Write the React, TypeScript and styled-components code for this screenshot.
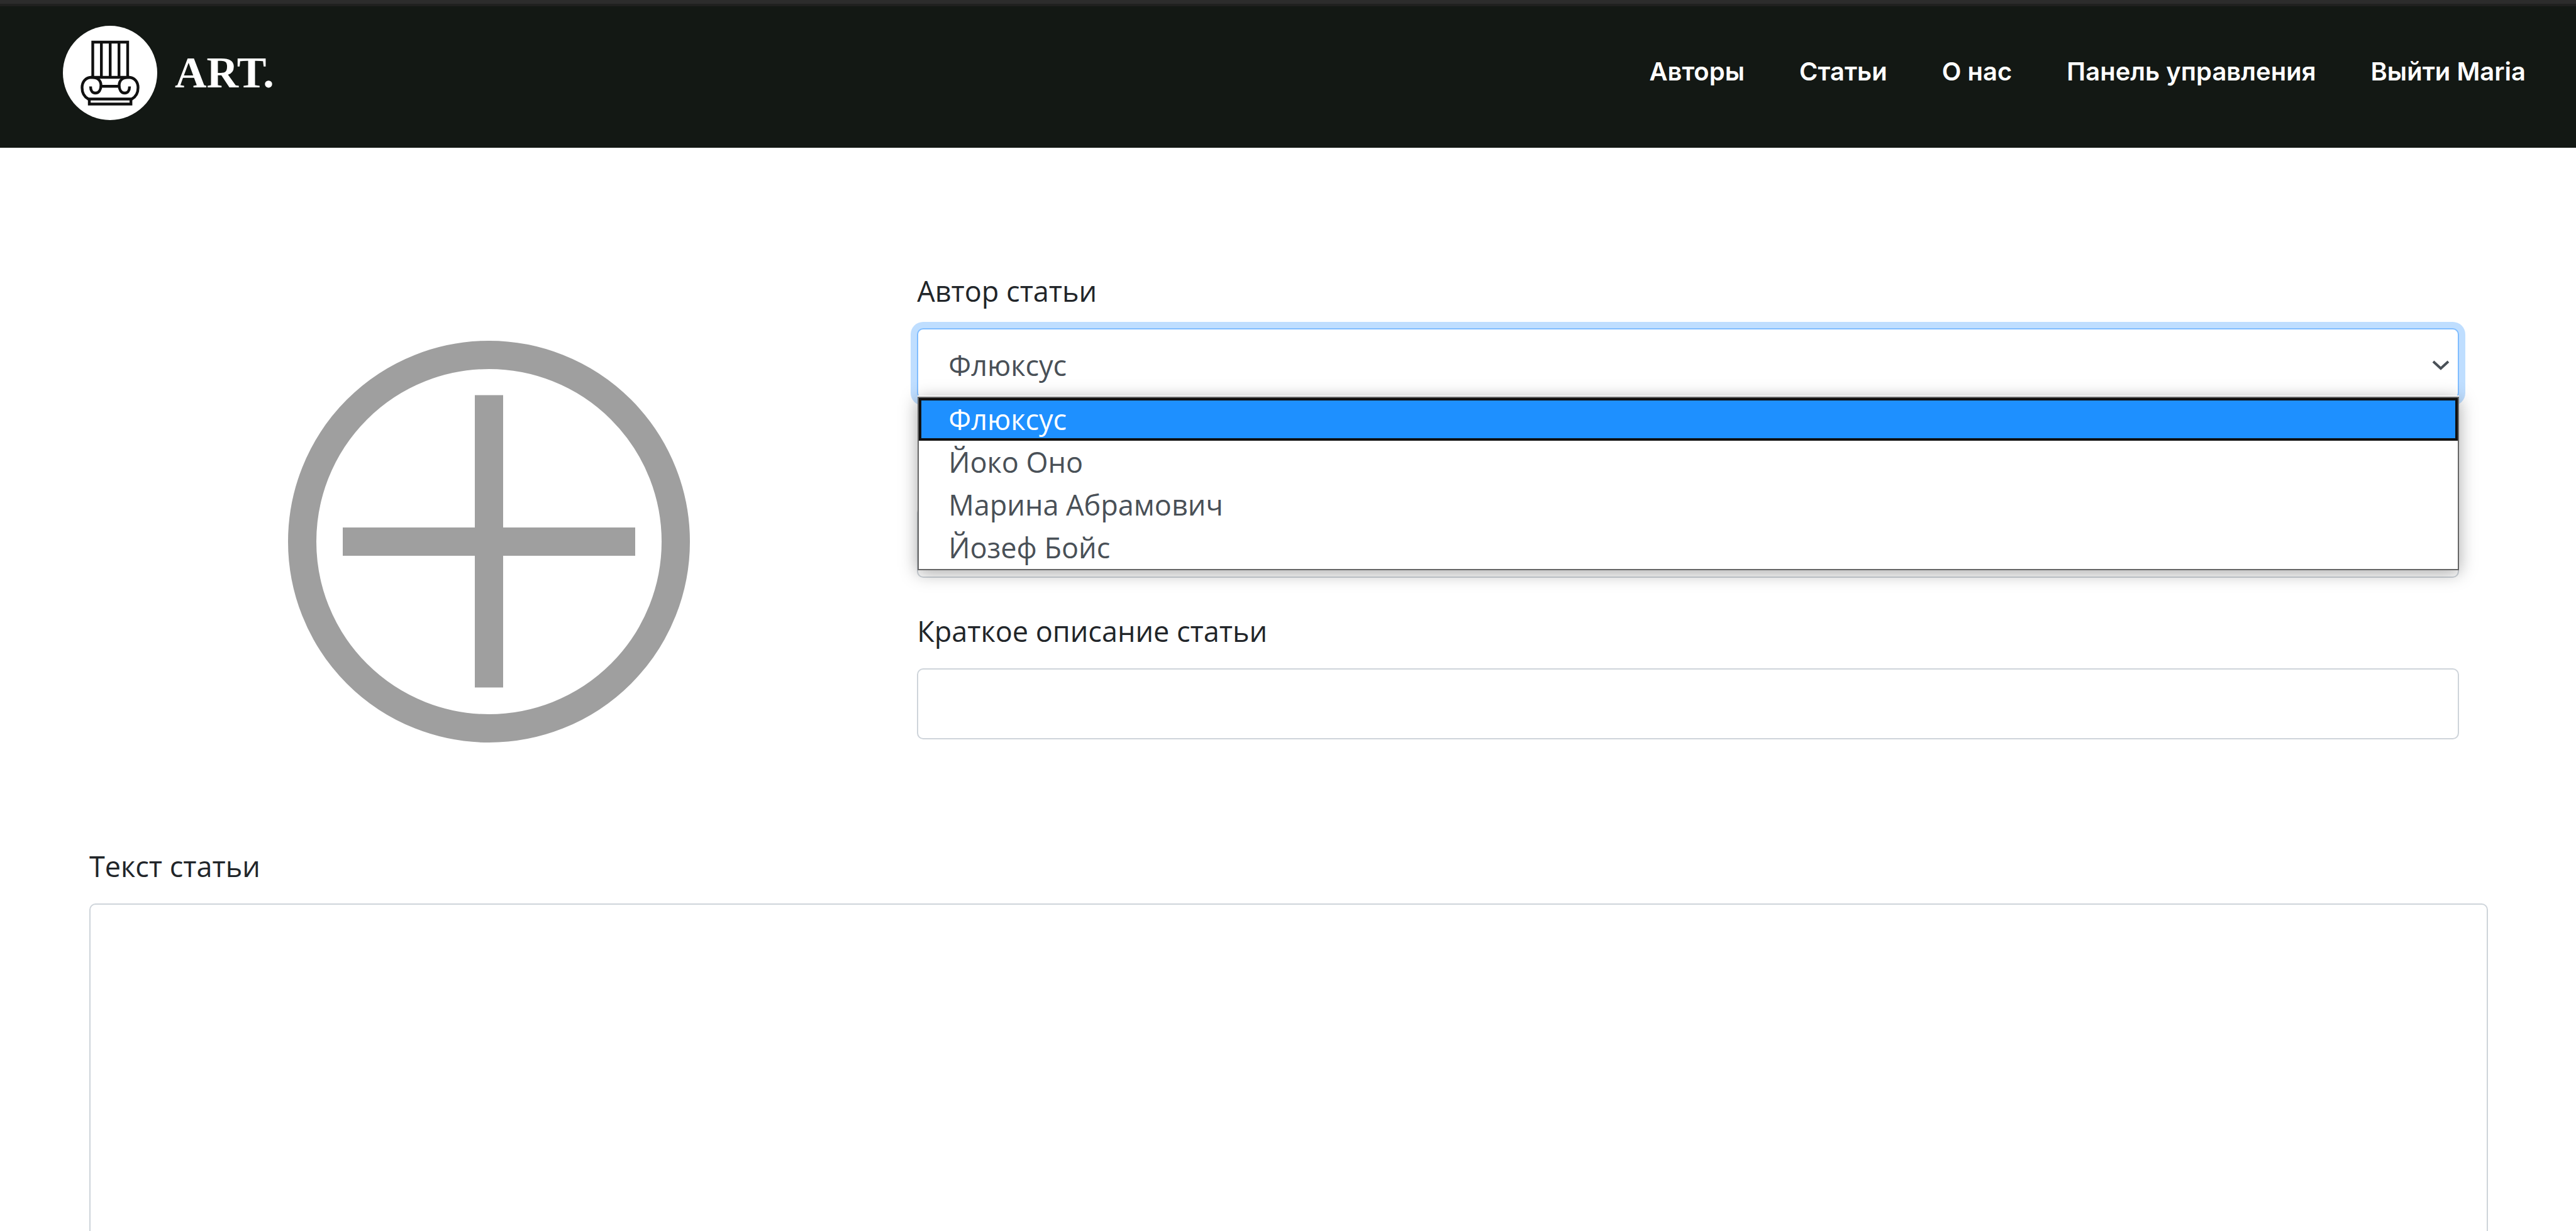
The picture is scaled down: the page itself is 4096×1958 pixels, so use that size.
import React, { useState } from 'react';
import styled, { createGlobalStyle } from 'styled-components';

const GlobalStyle = createGlobalStyle`
  *, *::before, *::after { box-sizing: border-box; }
  body {
    margin: 0;
    background: #fff;
    color: #212529;
    font-family: 'Open Sans', 'Noto Sans', sans-serif;
    font-size: 45px;
    line-height: 74px;
  }
`;

const Page = styled.div`
  display: flex;
  flex-direction: column;
  height: 100vh;
  overflow: hidden;
`;

const Header = styled.header`
  display: flex;
  justify-content: space-between;
  align-items: flex-start;
  flex: none;
  height: 235px;
  padding: 31px 80px 0 100px;
  border-top: 6px solid #2c2c2c;
  background: #131814;
  box-shadow: inset 0 4px 0 #1f201f;
`;

const Brand = styled.a`
  display: flex;
  align-items: center;
  gap: 28px;
  margin-top: 4px;
  color: #fff;
  font-family: 'Liberation Serif', serif;
  font-size: 70px;
  font-weight: 700;
  line-height: 84px;
  text-decoration: none;
`;

const Nav = styled.nav`
  display: flex;
  gap: 87px;
  margin-top: 40px;
`;

const NavLink = styled.a`
  color: #fff;
  font-family: Inter, sans-serif;
  font-size: 40px;
  font-weight: 600;
  line-height: 74px;
  text-decoration: none;
  white-space: nowrap;
`;

const Form = styled.form`
  display: flex;
  flex: 1;
  flex-direction: column;
  gap: 160px;
  padding: 191px 140px 0 142px;
`;

const TopRow = styled.div`
  display: grid;
  grid-template-columns: 1fr 2fr;
`;

const CoverColumn = styled.div`
  display: flex;
  justify-content: center;
  align-items: flex-start;
  padding-top: 116px;
`;

const CoverButton = styled.button`
  display: block;
  padding: 0;
  border: 0;
  border-radius: 50%;
  background: none;
  line-height: 0;
  cursor: pointer;
`;

const FieldsColumn = styled.div`
  display: flex;
  flex-direction: column;
  gap: 48px;
  padding: 0 46px 0 45px;
`;

const Field = styled.div<{ $spaced?: boolean }>`
  display: flex;
  flex-direction: column;
  gap: 22px;
  margin-bottom: ${(p) => (p.$spaced ? '27px' : '0')};
`;

const Label = styled.label`
  align-self: flex-start;
`;

const SelectBox = styled.div`
  position: relative;
`;

const control = `
  display: block;
  width: 100%;
  border: 2px solid #ced4da;
  border-radius: 10px;
  background: #fff;
  color: #495057;
  font: inherit;
  outline: none;
`;

const Select = styled.select`
  ${control}
  height: 113px;
  padding: 4px 96px 0 48px;
  appearance: none;
  border-color: #80bdff;
  box-shadow: 0 0 0 10px #bfdeff;
`;

const Chevron = styled.svg`
  position: absolute;
  top: 50px;
  right: 14px;
  pointer-events: none;
`;

const Options = styled.ul`
  position: absolute;
  z-index: 1;
  top: 109px;
  left: 1px;
  right: 0;
  margin: 0;
  padding: 0;
  border: 2px solid #666;
  background: #fff;
  color: #495057;
  line-height: 68px;
  list-style: none;
  box-shadow: 0 -2px 0 #f4f4f4, 0 4px 26px rgba(0, 0, 0, 0.35);
`;

const Option = styled.li<{ $active: boolean }>`
  height: 68px;
  padding: 0 47px;
  background: ${(p) => (p.$active ? '#1e90ff' : 'transparent')};
  box-shadow: ${(p) => (p.$active ? 'inset 0 0 0 4px #101010' : 'none')};
  color: ${(p) => (p.$active ? '#fff' : 'inherit')};
  cursor: default;
`;

const TextInput = styled.input`
  ${control}
  height: 113px;
  padding: 0 32px;
`;

const TextArea = styled.textarea`
  ${control}
  height: 1040px;
  padding: 16px 32px;
  resize: none;
`;

const links = ['Авторы', 'Статьи', 'О нас', 'Панель управления', 'Выйти Maria'];
const authors = ['Флюксус', 'Йоко Оно', 'Марина Абрамович', 'Йозеф Бойс'];

function ColumnLogo() {
  return (
    <svg width="150" height="150" viewBox="0 0 150 150" aria-hidden="true">
      <circle cx="75" cy="75" r="75" fill="#fff" />
      <g fill="none" stroke="#101010" strokeWidth="4.4">
        <path d="M47.5 82V26H103V82M61.2 26V82M75.2 26V82M89.2 26V82" />
        <path d="M44 82H106" />
        <path d="M44 96.500C44 103 47 107 51.500 107C57.500 107 60.500 101.500 60.500 95C60.500 87 55 82 46 82C36 82 30.500 89 30.500 98.500C30.500 106.500 34 113 40.500 116.500" />
        <path d="M106 96.500C106 103 103 107 98.500 107C92.500 107 89.500 101.500 89.500 95C89.500 87 95 82 104 82C114 82 119.500 89 119.500 98.500C119.500 106.500 116 113 109.500 116.500" />
        <path d="M60.500 96.200H89.500M39.500 116.500H110.500" />
        <path d="M42 116.500V124.500H108.200V116.500" />
      </g>
    </svg>
  );
}

function PlusCircle() {
  return (
    <svg width="639" height="639" viewBox="0 0 639 639" aria-hidden="true">
      <g fill="none" stroke="#9f9f9f" strokeWidth="45">
        <circle cx="319.500" cy="319.500" r="297" />
        <path d="M87 319.500H552M319.500 86.500V551.500" />
      </g>
    </svg>
  );
}

export default function App() {
  const [author, setAuthor] = useState(authors[0]);

  return (
    <Page>
      <GlobalStyle />
      <Header>
        <Brand href="#">
          <ColumnLogo />
          ART.
        </Brand>
        <Nav>
          {links.map((link) => (
            <NavLink key={link} href="#">
              {link}
            </NavLink>
          ))}
        </Nav>
      </Header>
      <Form>
        <TopRow>
          <CoverColumn>
            <CoverButton type="button" aria-label="Добавить изображение">
              <PlusCircle />
            </CoverButton>
          </CoverColumn>
          <FieldsColumn>
            <Field $spaced>
              <Label htmlFor="author">Автор статьи</Label>
              <SelectBox>
                <Select id="author" value={author} onChange={(e) => setAuthor(e.target.value)}>
                  {authors.map((name) => (
                    <option key={name}>{name}</option>
                  ))}
                </Select>
                <Chevron width="30" height="18" viewBox="0 0 30 18" aria-hidden="true">
                  <path d="M3 3L15 14L27 3" fill="none" stroke="#495057" strokeWidth="4" />
                </Chevron>
                <Options role="listbox" aria-label="Автор статьи">
                  {authors.map((name) => (
                    <Option
                      key={name}
                      role="option"
                      aria-selected={name === author}
                      $active={name === author}
                      onClick={() => setAuthor(name)}
                    >
                      {name}
                    </Option>
                  ))}
                </Options>
              </SelectBox>
            </Field>
            <Field>
              <Label htmlFor="title" aria-label="Название статьи">
                &nbsp;
              </Label>
              <TextInput id="title" type="text" />
            </Field>
            <Field>
              <Label htmlFor="summary">Краткое описание статьи</Label>
              <TextInput id="summary" type="text" />
            </Field>
          </FieldsColumn>
        </TopRow>
        <Field>
          <Label htmlFor="text">Текст статьи</Label>
          <TextArea id="text" />
        </Field>
      </Form>
    </Page>
  );
}
